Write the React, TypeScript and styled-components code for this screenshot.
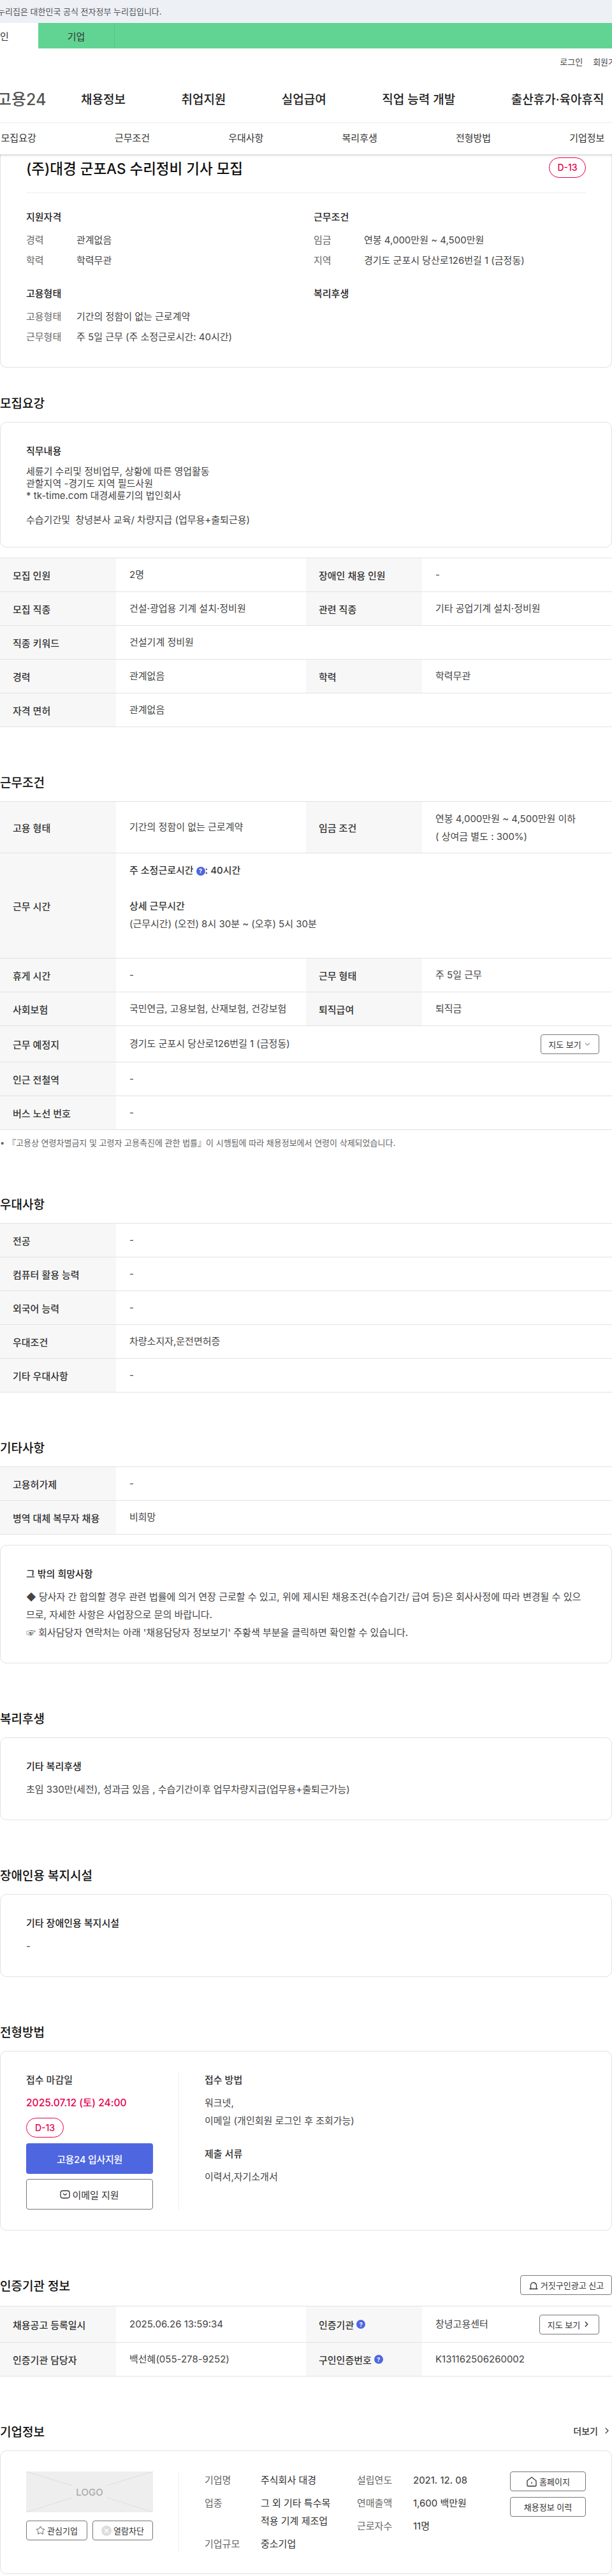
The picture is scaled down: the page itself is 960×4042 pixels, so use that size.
import { type ReactNode } from "react";
import styled, { createGlobalStyle } from "styled-components";
import { ChevronDown, ChevronRight, Star } from "lucide-react";

const GlobalStyle = createGlobalStyle`
  html, body {
    margin: 0;
    padding: 0;
    background: #fff;
  }
  body {
    font-family: Inter, "Noto Sans CJK KR", sans-serif;
    font-size: 15px;
    color: #333;
  }
  * {
    box-sizing: border-box;
  }
`;

const Page = styled.div`
  width: 960px;
  height: 4042px;
  overflow: hidden;
`;

/* 상단 배너 */
const GovBanner = styled.div`
  height: 36px;
  line-height: 36px;
  background: #edf0f5;
  font-size: 13px;
  color: #555;
  span {
    display: block;
    margin-left: -4px;
    white-space: nowrap;
  }
`;

const SiteTabs = styled.div`
  display: flex;
  height: 40px;
  margin-left: -60px;
  background: #61d493;
`;

const SiteTab = styled.div<{ $active?: boolean }>`
  width: 120px;
  display: flex;
  align-items: center;
  justify-content: center;
  font-size: 15px;
  color: #333;
  background: ${({ $active }) => ($active ? "#fff" : "transparent")};
  border-right: ${({ $active }) => ($active ? "none" : "1px solid #55c387")};
`;

const UtilBar = styled.div`
  height: 40px;
  display: flex;
  justify-content: flex-end;
  align-items: center;
  gap: 16px;
  margin-right: -18px;
  font-size: 13px;
  color: #444;
`;

const MainNav = styled.div`
  display: flex;
  align-items: center;
  height: 77px;
  border-bottom: 1px solid #eee;
`;

const Logo = styled.div`
  flex: none;
  width: 132px;
  margin-left: -5px;
  font-size: 25px;
  font-weight: 500;
  color: #555;
  white-space: nowrap;
`;

const NavList = styled.nav`
  display: flex;
  gap: 87.5px;
  font-size: 19px;
  font-weight: 500;
  color: #222;
  white-space: nowrap;
`;

const AnchorBar = styled.div`
  position: relative;
  z-index: 1;
  display: flex;
  height: 49px;
  background: #fff;
  box-shadow: 0 2px 3px rgba(0, 0, 0, 0.16);
  margin-left: -60px;
  width: 1080px;
  padding-right: 10px;
`;

const AnchorItem = styled.a`
  width: 178.4px;
  text-align: center;
  line-height: 48px;
  font-size: 15px;
  color: #333;
`;

/* 카드 공통 */
const Card = styled.div`
  border: 1px solid #e2e2e2;
  border-radius: 10px;
  padding: 35px 40px 33px;
`;

const SummaryCard = styled.div`
  border: 1px solid #e2e2e2;
  border-top: none;
  border-radius: 0 0 10px 10px;
  padding: 0 40px 31px;
`;

const TitleRow = styled.div`
  display: flex;
  justify-content: space-between;
  align-items: center;
  height: 61px;
  padding: 5px 0 24px;
  border-bottom: 1px solid #eee;
  margin-bottom: 28px;
`;

const JobTitle = styled.h1`
  margin: 0;
  font-size: 22.5px;
  font-weight: 500;
  color: #111;
  white-space: nowrap;
`;

const DdayBadge = styled.span<{ $wide?: boolean }>`
  display: inline-flex;
  align-items: center;
  justify-content: center;
  width: ${({ $wide }) => ($wide ? "59px" : "58px")};
  height: ${({ $wide }) => ($wide ? "31px" : "32px")};
  border: 1px solid #e6004e;
  border-radius: 16px;
  color: #e6004e;
  font-size: 14px;
  font-weight: 500;
`;

const SummaryGrid = styled.div`
  display: grid;
  grid-template-columns: 451px 1fr;
  row-gap: 26px;
`;

const GroupTitle = styled.h3<{ $mb?: number }>`
  margin: 0 0 ${({ $mb }) => $mb ?? 11}px;
  font-size: 15px;
  line-height: 19px;
  font-weight: 500;
  color: #222;
`;

const SummaryRow = styled.div`
  display: flex;
  line-height: 32px;
  font-size: 15px;
  span:first-child {
    width: 79px;
    color: #666;
    flex: none;
  }
  span:last-child {
    color: #444;
  }
`;

const BodyText = styled.div<{ $lh?: number }>`
  font-size: 15px;
  line-height: ${({ $lh }) => $lh ?? 28}px;
  color: #444;
`;

/* 섹션 */
const Section = styled.section<{ $top?: number }>`
  padding-top: ${({ $top }) => $top ?? 70}px;
`;

const SectionHead = styled.div<{ $mb?: number }>`
  display: flex;
  justify-content: space-between;
  align-items: center;
  min-height: 30px;
  margin-bottom: ${({ $mb }) => $mb ?? 16}px;
`;

const SectionTitle = styled.h2`
  margin: 0;
  font-size: 19px;
  font-weight: 500;
  color: #111;
`;

const Spacer = styled.div`
  height: 16px;
`;

/* 표 */
const Table = styled.div`
  border-top: 1px solid #e2e2e2;
`;

const Row = styled.div<{ $h?: number; $full?: boolean }>`
  display: grid;
  grid-template-columns: ${({ $full }) =>
    $full ? "182px 1fr" : "182px 298px 182px 1fr"};
  height: ${({ $h }) => $h ?? 53}px;
  border-bottom: 1px solid #e2e2e2;
`;

const Th = styled.div`
  display: flex;
  align-items: center;
  gap: 4px;
  padding-left: 20px;
  background: #f7f7f7;
  font-size: 15px;
  font-weight: 500;
  color: #333;
`;

const Td = styled.div<{ $between?: boolean; $block?: boolean }>`
  display: ${({ $block }) => ($block ? "block" : "flex")};
  align-items: center;
  justify-content: ${({ $between }) => ($between ? "space-between" : "flex-start")};
  padding: ${({ $block }) => ($block ? "13px 20px 0 21px" : "0 20px 0 21px")};
  font-size: 15px;
  line-height: 28px;
  color: #444;
`;

const Strong = styled.span`
  font-weight: 500;
  color: #333;
`;

const Help = styled.span`
  display: inline-flex;
  align-items: center;
  justify-content: center;
  width: 14px;
  height: 14px;
  border-radius: 50%;
  background: #4e67e0;
  color: #fff;
  font-size: 9px;
  font-weight: 700;
  vertical-align: 1px;
`;

const Note = styled.p`
  display: flex;
  gap: 6px;
  margin: 10px 0 -2px;
  font-size: 13px;
  line-height: 20px;
  color: #666;
  &::before {
    content: "•";
    width: 6px;
    text-align: center;
  }
`;

/* 버튼 */
const OutlineButton = styled.button<{ $w?: number; $h?: number; $size?: number }>`
  display: inline-flex;
  align-items: center;
  justify-content: center;
  gap: 3px;
  width: ${({ $w }) => ($w ? `${$w}px` : "100%")};
  height: ${({ $h }) => $h ?? 31}px;
  padding: 0;
  flex: none;
  background: #fff;
  border: 1px solid #777;
  border-radius: 4px;
  font-family: inherit;
  font-size: ${({ $size }) => $size ?? 13}px;
  color: #333;
`;

const PrimaryButton = styled.button`
  display: block;
  width: 100%;
  height: 48px;
  margin: 9px 0 8px;
  background: #4e67e0;
  border: none;
  border-radius: 4px;
  font-family: inherit;
  font-size: 15px;
  font-weight: 500;
  letter-spacing: -0.3px;
  color: #fff;
`;

const MoreLink = styled.a`
  display: flex;
  align-items: center;
  gap: 6px;
  font-size: 14px;
  font-weight: 500;
  color: #333;
`;

/* 전형방법 / 기업정보 */
const SplitCard = styled(Card)`
  display: flex;
  padding: 32px 40px;
`;

const SideCol = styled.div`
  flex: none;
  width: 240px;
  padding-right: 40px;
  border-right: 1px solid #eee;
`;

const MainCol = styled.div`
  flex: 1;
  margin-left: 40px;
  min-width: 0;
`;

const ApplyHead = styled.h3<{ $top?: number }>`
  margin: ${({ $top }) => $top ?? 0}px 0 9px;
  font-size: 15px;
  line-height: 26px;
  font-weight: 500;
  color: #333;
`;

const Deadline = styled.div`
  font-size: 15.6px;
  line-height: 28px;
  font-weight: 500;
  color: #e6004e;
  margin-bottom: 9px;
`;

const CompanyBody = styled.div`
  display: flex;
`;

const InfoCol = styled.div<{ $w: number }>`
  flex: none;
  width: ${({ $w }) => $w}px;
  display: flex;
  flex-direction: column;
  gap: 8px;
`;

const InfoRow = styled.div`
  display: flex;
  font-size: 15px;
  line-height: 28px;
  dt {
    flex: none;
    width: 88px;
    color: #666;
  }
  dd {
    margin: 0;
    color: #333;
    white-space: nowrap;
  }
`;

const ButtonCol = styled.div`
  flex: none;
  width: 119px;
  display: flex;
  flex-direction: column;
  gap: 9px;
`;

const LogoBox = styled.div`
  position: relative;
  height: 64px;
  background: #eee;
  display: flex;
  align-items: center;
  justify-content: center;
  font-size: 15px;
  font-weight: 500;
  color: #aaa;
  svg {
    position: absolute;
    inset: 0;
    width: 100%;
    height: 100%;
  }
`;

const LogoActions = styled.div`
  display: flex;
  justify-content: space-between;
  margin-top: 13px;
`;

const Icon = styled.svg`
  flex: none;
  fill: none;
  stroke: currentColor;
  stroke-width: 1.3;
`;

const MailIcon = () => (
  <Icon width="16" height="16" viewBox="0 0 16 16">
    <rect x="1" y="2.5" width="14" height="11.5" rx="3.2" />
    <path d="M5 7l3 2.4L11 7" />
  </Icon>
);

const DomeIcon = () => (
  <Icon width="16" height="16" viewBox="0 0 16 16">
    <path d="M3.5 13.5V8a4.5 4.5 0 0 1 9 0v5.5M1.5 13.5h13M9.6 6.2h.8" />
  </Icon>
);

const HomeIcon = () => (
  <Icon width="18" height="18" viewBox="0 0 18 18">
    <path d="M2 7.6L9 2l7 5.6v7.2a1.2 1.2 0 0 1-1.2 1.2H3.2A1.2 1.2 0 0 1 2 14.800V7.600zM9 9.500V12" />
  </Icon>
);

const BlockIcon = () => (
  <svg width="16" height="16" viewBox="0 0 16 16">
    <circle cx="8" cy="8" r="8" fill="#ddd" />
    <path d="M5 5l6 6M11 5l-6 6" stroke="#fff" strokeWidth="1.5" />
  </svg>
);

interface Cell {
  label: ReactNode;
  value: ReactNode;
}

function DetailRows({ rows }: { rows: Cell[][] }) {
  return (
    <Table>
      {rows.map((cells, i) => (
        <Row key={i} $full={cells.length === 1}>
          {cells.map((cell, j) => [
            <Th key={`t${j}`}>{cell.label}</Th>,
            <Td key={`d${j}`}>{cell.value}</Td>,
          ])}
        </Row>
      ))}
    </Table>
  );
}

const anchors = ["모집요강", "근무조건", "우대사항", "복리후생", "전형방법", "기업정보"];
const navItems = ["채용정보", "취업지원", "실업급여", "직업 능력 개발", "출산휴가·육아휴직"];

const recruitRows: Cell[][] = [
  [
    { label: "모집 인원", value: "2명" },
    { label: "장애인 채용 인원", value: "-" },
  ],
  [
    { label: "모집 직종", value: "건설·광업용 기계 설치·정비원" },
    { label: "관련 직종", value: "기타 공업기계 설치·정비원" },
  ],
  [{ label: "직종 키워드", value: "건설기계 정비원" }],
  [
    { label: "경력", value: "관계없음" },
    { label: "학력", value: "학력무관" },
  ],
  [{ label: "자격 면허", value: "관계없음" }],
];

const preferRows: Cell[][] = [
  [{ label: "전공", value: "-" }],
  [{ label: "컴퓨터 활용 능력", value: "-" }],
  [{ label: "외국어 능력", value: "-" }],
  [{ label: "우대조건", value: "차량소지자,운전면허증" }],
  [{ label: "기타 우대사항", value: "-" }],
];

const etcRows: Cell[][] = [
  [{ label: "고용허가제", value: "-" }],
  [{ label: "병역 대체 복무자 채용", value: "비희망" }],
];

export default function App() {
  return (
    <Page>
      <GlobalStyle />
      <GovBanner>
        <span>누리집은 대한민국 공식 전자정부 누리집입니다.</span>
      </GovBanner>
      <SiteTabs>
        <SiteTab $active>개인</SiteTab>
        <SiteTab>기업</SiteTab>
      </SiteTabs>
      <UtilBar>
        <span>로그인</span>
        <span>회원가입</span>
      </UtilBar>
      <MainNav>
        <Logo>고용24</Logo>
        <NavList>
          {navItems.map((item) => (
            <span key={item}>{item}</span>
          ))}
        </NavList>
      </MainNav>
      <AnchorBar>
        {anchors.map((item) => (
          <AnchorItem key={item}>{item}</AnchorItem>
        ))}
      </AnchorBar>

      <SummaryCard>
        <TitleRow>
          <JobTitle>(주)대경 군포AS 수리정비 기사 모집</JobTitle>
          <DdayBadge>D-13</DdayBadge>
        </TitleRow>
        <SummaryGrid>
          <div>
            <GroupTitle>지원자격</GroupTitle>
            <SummaryRow>
              <span>경력</span>
              <span>관계없음</span>
            </SummaryRow>
            <SummaryRow>
              <span>학력</span>
              <span>학력무관</span>
            </SummaryRow>
          </div>
          <div>
            <GroupTitle>근무조건</GroupTitle>
            <SummaryRow>
              <span>임금</span>
              <span>연봉 4,000만원 ~ 4,500만원</span>
            </SummaryRow>
            <SummaryRow>
              <span>지역</span>
              <span>경기도 군포시 당산로126번길 1 (금정동)</span>
            </SummaryRow>
          </div>
          <div>
            <GroupTitle>고용형태</GroupTitle>
            <SummaryRow>
              <span>고용형태</span>
              <span>기간의 정함이 없는 근로계약</span>
            </SummaryRow>
            <SummaryRow>
              <span>근무형태</span>
              <span>주 5일 근무 (주 소정근로시간: 40시간)</span>
            </SummaryRow>
          </div>
          <div>
            <GroupTitle>복리후생</GroupTitle>
          </div>
        </SummaryGrid>
      </SummaryCard>

      <Section $top={39}>
        <SectionHead>
          <SectionTitle>모집요강</SectionTitle>
        </SectionHead>
        <Card>
          <GroupTitle $mb={13}>직무내용</GroupTitle>
          <BodyText $lh={19}>
            세륜기 수리및 정비업무, 상황에 따른 영업활동
            <br />
            관할지역 -경기도 지역 필드사원
            <br />* tk-time.com 대경세륜기의 법인회사
            <br />
            <br />
            수습기간및&nbsp; 창녕본사 교육/ 차량지급 (업무용+출퇴근용)
          </BodyText>
        </Card>
        <Spacer />
        <DetailRows rows={recruitRows} />
      </Section>

      <Section>
        <SectionHead>
          <SectionTitle>근무조건</SectionTitle>
        </SectionHead>
        <Table>
          <Row $h={81}>
            <Th>고용 형태</Th>
            <Td>기간의 정함이 없는 근로계약</Td>
            <Th>임금 조건</Th>
            <Td $block>
              연봉 4,000만원 ~ 4,500만원 이하
              <br />( 상여금 별도 : 300%)
            </Td>
          </Row>
          <Row $h={165} $full>
            <Th>근무 시간</Th>
            <Td $block>
              <Strong>
                주 소정근로시간 <Help>?</Help>: 40시간
              </Strong>
              <br />
              <br />
              <Strong>상세 근무시간</Strong>
              <br />
              (근무시간) (오전) 8시 30분 ~ (오후) 5시 30분
            </Td>
          </Row>
          <Row>
            <Th>휴게 시간</Th>
            <Td>-</Td>
            <Th>근무 형태</Th>
            <Td>주 5일 근무</Td>
          </Row>
          <Row>
            <Th>사회보험</Th>
            <Td>국민연금, 고용보험, 산재보험, 건강보험</Td>
            <Th>퇴직급여</Th>
            <Td>퇴직금</Td>
          </Row>
          <Row $h={57} $full>
            <Th>근무 예정지</Th>
            <Td $between>
              경기도 군포시 당산로126번길 1 (금정동)
              <OutlineButton $w={92}>
                지도 보기 <ChevronDown size={13} strokeWidth={1.6} />
              </OutlineButton>
            </Td>
          </Row>
          <Row $full>
            <Th>인근 전철역</Th>
            <Td>-</Td>
          </Row>
          <Row $full>
            <Th>버스 노선 번호</Th>
            <Td>-</Td>
          </Row>
        </Table>
        <Note>『고용상 연령차별금지 및 고령자 고용촉진에 관한 법률』이 시행됨에 따라 채용정보에서 연령이 삭제되었습니다.</Note>
      </Section>

      <Section $top={72}>
        <SectionHead>
          <SectionTitle>우대사항</SectionTitle>
        </SectionHead>
        <DetailRows rows={preferRows} />
      </Section>

      <Section>
        <SectionHead>
          <SectionTitle>기타사항</SectionTitle>
        </SectionHead>
        <DetailRows rows={etcRows} />
        <Spacer />
        <Card>
          <GroupTitle $mb={13}>그 밖의 희망사항</GroupTitle>
          <BodyText>
            ◆ 당사자 간 합의할 경우 관련 법률에 의거 연장 근로할 수 있고, 위에 제시된 채용조건(수습기간/ 급여 등)은 회사사정에 따라 변경될 수 있으므로, 자세한 사항은 사업장으로 문의 바랍니다.
            <br />☞ 회사담당자 연락처는 아래 '채용담당자 정보보기' 주황색 부분을 클릭하면 확인할 수 있습니다.
          </BodyText>
        </Card>
      </Section>

      <Section>
        <SectionHead>
          <SectionTitle>복리후생</SectionTitle>
        </SectionHead>
        <Card>
          <GroupTitle $mb={13}>기타 복리후생</GroupTitle>
          <BodyText>초임 330만(세전), 성과금 있음 , 수습기간이후 업무차량지급(업무용+출퇴근가능)</BodyText>
        </Card>
      </Section>

      <Section>
        <SectionHead>
          <SectionTitle>장애인용 복지시설</SectionTitle>
        </SectionHead>
        <Card>
          <GroupTitle $mb={13}>기타 장애인용 복지시설</GroupTitle>
          <BodyText>-</BodyText>
        </Card>
      </Section>

      <Section>
        <SectionHead>
          <SectionTitle>전형방법</SectionTitle>
        </SectionHead>
        <SplitCard>
          <SideCol>
            <ApplyHead>접수 마감일</ApplyHead>
            <Deadline>2025.07.12 (토) 24:00</Deadline>
            <DdayBadge $wide>D-13</DdayBadge>
            <PrimaryButton>고용24 입사지원</PrimaryButton>
            <OutlineButton $h={48} $size={15}>
              <MailIcon /> 이메일 지원
            </OutlineButton>
          </SideCol>
          <MainCol>
            <ApplyHead>접수 방법</ApplyHead>
            <BodyText>
              워크넷,
              <br />
              이메일 (개인회원 로그인 후 조회가능)
            </BodyText>
            <ApplyHead $top={25}>제출 서류</ApplyHead>
            <BodyText>이력서,자기소개서</BodyText>
          </MainCol>
        </SplitCard>
      </Section>

      <Section>
        <SectionHead $mb={17}>
          <SectionTitle>인증기관 정보</SectionTitle>
          <OutlineButton $w={144}>
            <DomeIcon /> 거짓구인광고 신고
          </OutlineButton>
        </SectionHead>
        <Table>
          <Row $h={57}>
            <Th>채용공고 등록일시</Th>
            <Td>2025.06.26 13:59:34</Td>
            <Th>
              인증기관 <Help>?</Help>
            </Th>
            <Td $between>
              창녕고용센터
              <OutlineButton $w={94}>
                지도 보기 <ChevronRight size={14} strokeWidth={2.4} />
              </OutlineButton>
            </Td>
          </Row>
          <Row>
            <Th>인증기관 담당자</Th>
            <Td>백선혜(055-278-9252)</Td>
            <Th>
              구인인증번호 <Help>?</Help>
            </Th>
            <Td>K131162506260002</Td>
          </Row>
        </Table>
      </Section>

      <Section>
        <SectionHead>
          <SectionTitle>기업정보</SectionTitle>
          <MoreLink>
            더보기 <ChevronRight size={16} strokeWidth={1.6} />
          </MoreLink>
        </SectionHead>
        <SplitCard>
          <SideCol>
            <LogoBox>
              <svg viewBox="0 0 199 64" preserveAspectRatio="none" aria-hidden="true">
                <path
                  d="M0 0l72 22M199 0l-72 22M0 64l72-23M199 64l-72-23"
                  stroke="#ddd"
                  fill="none"
                />
              </svg>
              LOGO
            </LogoBox>
            <LogoActions>
              <OutlineButton $w={96}>
                <Star size={15} strokeWidth={1.3} /> 관심기업
              </OutlineButton>
              <OutlineButton $w={95}>
                <BlockIcon /> 열람차단
              </OutlineButton>
            </LogoActions>
          </SideCol>
          <MainCol>
            <CompanyBody>
              <InfoCol $w={239}>
                <InfoRow>
                  <dt>기업명</dt>
                  <dd>주식회사 대경</dd>
                </InfoRow>
                <InfoRow>
                  <dt>업종</dt>
                  <dd>
                    그 외 기타 특수목
                    <br />
                    적용 기계 제조업
                  </dd>
                </InfoRow>
                <InfoRow>
                  <dt>기업규모</dt>
                  <dd>중소기업</dd>
                </InfoRow>
              </InfoCol>
              <InfoCol $w={240}>
                <InfoRow>
                  <dt>설립연도</dt>
                  <dd>2021. 12. 08</dd>
                </InfoRow>
                <InfoRow>
                  <dt>연매출액</dt>
                  <dd>1,600 백만원</dd>
                </InfoRow>
                <InfoRow>
                  <dt>근로자수</dt>
                  <dd>11명</dd>
                </InfoRow>
              </InfoCol>
              <ButtonCol>
                <OutlineButton>
                  <HomeIcon /> 홈페이지
                </OutlineButton>
                <OutlineButton>채용정보 이력</OutlineButton>
              </ButtonCol>
            </CompanyBody>
          </MainCol>
        </SplitCard>
      </Section>
    </Page>
  );
}
